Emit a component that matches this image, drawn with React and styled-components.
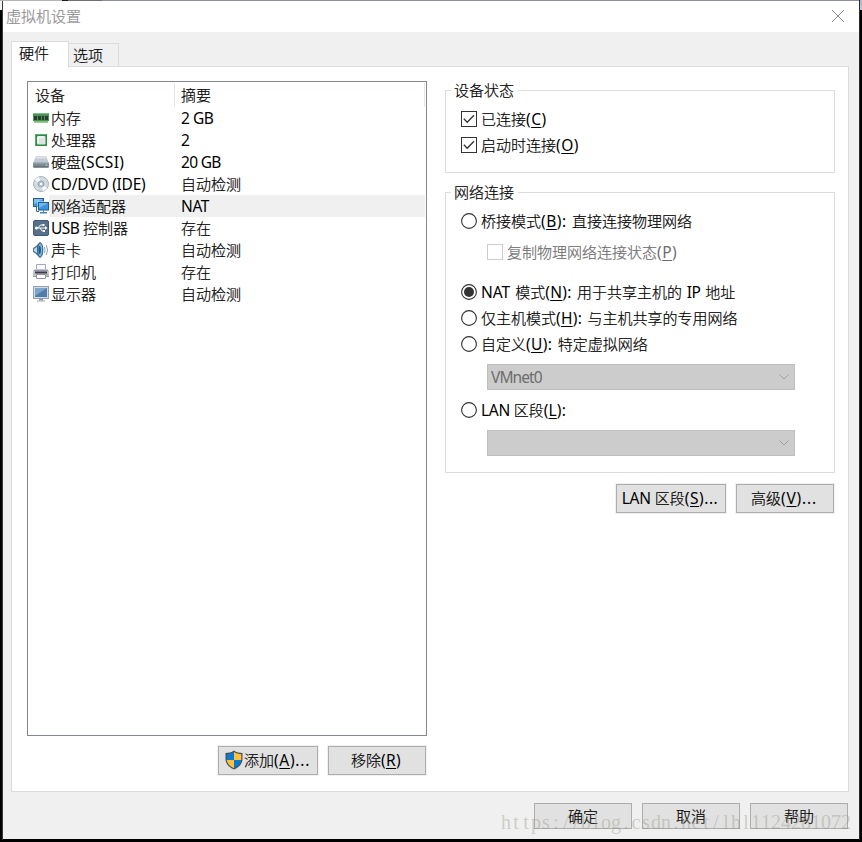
import React from "react";
import styled, { createGlobalStyle } from "styled-components";

const Global = createGlobalStyle`
  * { box-sizing: border-box; }
  body {
    margin: 0;
    background: #000;
    color: #000;
    font: 300 15px/22px "Noto Sans CJK SC", sans-serif;
    -webkit-text-stroke: 0.2px;
    overflow: hidden;
  }
`;

const Desktop = styled.div`
  height: 842px;
  padding: 1px 3px 2px;
  background:
    linear-gradient(#8b8f9b, #8b8f9b) 102px 0 / 757px 1px no-repeat,
    linear-gradient(#6f7076, #6f7076) 68px 0 / 34px 1px no-repeat,
    linear-gradient(#1d1d1d, #1d1d1d) 62px 0 / 6px 1px no-repeat,
    linear-gradient(#b5b5b5, #b5b5b5) 0 0 / 62px 1px no-repeat,
    linear-gradient(#f2f2f2, #f2f2f2) 0 0 / 2px 10px no-repeat,
    linear-gradient(#a9b0c8, #c3cade) 860px 0 / 2px 10px no-repeat,
    linear-gradient(#2c2c2c, #2c2c2c) 859px 0 / 1px 840px no-repeat,
    linear-gradient(#3a3a3a, #3a3a3a) 2px 0 / 1px 840px no-repeat,
    #000;
`;

const Window = styled.div`
  width: 856px;
  height: 838px;
  background: #f0f0f0;
  display: flex;
  flex-direction: column;
`;

const TitleBar = styled.header`
  height: 31px;
  flex: none;
  background: #fff;
  color: #8c8c8c;
  display: flex;
  justify-content: space-between;
  padding: 4px 14px 0 3px;
  svg { margin-top: 4px; }
`;

const Tabs = styled.nav`
  display: flex;
  align-items: flex-end;
  height: 26px;
  margin: 9px 0 -1px 8px;
  flex: none;
`;

const Tab = styled.div`
  width: ${(p) => (p.$active ? 58 : 50)}px;
  height: ${(p) => (p.$active ? 27 : 24)}px;
  margin-bottom: ${(p) => (p.$active ? -1 : 0)}px;
  padding: ${(p) => (p.$active ? "0 0 0 7px" : "0 0 0 4px")};
  line-height: ${(p) => (p.$active ? 22 : 21)}px;
  border: 1px solid #dcdcdc;
  border-left-width: ${(p) => (p.$active ? 1 : 0)}px;
  border-bottom: ${(p) => (p.$active ? "0" : "1px solid #dcdcdc")};
  background: ${(p) => (p.$active ? "#fff" : "#f0f0f0")};
  position: relative;
`;

const Page = styled.main`
  width: 838px;
  height: 726px;
  flex: none;
  margin-left: 8px;
  border: 1px solid #dcdcdc;
  background: #fff;
  display: flex;
  padding: 14px 13px 0 15px;
`;

const Left = styled.section`
  width: 400px;
  margin-right: 18px;
`;

const DeviceList = styled.div`
  height: 655px;
  border: 1px solid #828790;
  padding: 1px 0 0;
`;

const ListHead = styled.div`
  display: grid;
  grid-template-columns: 146px 250px 1px;
  height: 24px;
  line-height: 23px;
  > span { padding-left: 7px; }
  > span + span { border-left: 1px solid #e5e5e5; padding-left: 6px; }
  > span:last-child { padding: 0; }
`;

const DeviceRow = styled.div`
  display: grid;
  grid-template-columns: 16px 130px 1fr;
  height: 22px;
  margin: 0 1px 0 5px;
  align-items: center;
`;

const Cell = styled.span`
  height: 22px;
  line-height: 22px;
  padding-left: 2px;
  white-space: nowrap;
  background: ${(p) => (p.$selected ? "#f0f0f0" : "transparent")};
`;

const ButtonRow = styled.div`
  display: flex;
  justify-content: flex-end;
  gap: 10px;
  margin-top: ${(p) => p.$top}px;
  padding-right: ${(p) => p.$right || 0}px;
`;

const Button = styled.button`
  width: ${(p) => p.$w || 98}px;
  height: ${(p) => p.$h || 29}px;
  padding: ${(p) => (p.$h ? "0" : "0 2px 2px 0")};
  border: 1px solid #adadad;
  outline: ${(p) => (p.$h ? "0" : "1px solid #f0f0f0")};
  background: #e1e1e1;
  color: #000;
  font: inherit;
  display: flex;
  align-items: center;
  justify-content: center;
  white-space: nowrap;
`;

const Right = styled.section`
  width: 390px;
  padding-top: 9px;
`;

const Group = styled.fieldset`
  margin: 0 0 ${(p) => p.$gap || 0}px;
  min-width: 0;
  height: ${(p) => p.$h}px;
  border: 1px solid #dcdcdc;
  padding: ${(p) => p.$top}px 0 0 15px;
  margin-top: -11px;
  legend { padding: 0 4px 0 3px; margin-left: -10px; height: 22px; }
`;

const Option = styled.label`
  display: flex;
  align-items: center;
  gap: 4px;
  height: 26px;
  white-space: nowrap;
  margin: ${(p) => p.$m || "0"};
  color: ${(p) => (p.$disabled ? "#6d6d6d" : "#000")};
`;

const Combo = styled.div`
  width: 308px;
  height: 26px;
  margin: ${(p) => p.$m};
  border: 1px solid #bfbfbf;
  background: #ccc;
  color: #6d6d6d;
  display: flex;
  align-items: center;
  justify-content: space-between;
  padding: 0 4px 0 3px;
`;

const Latin = styled.span`
  font: 400 15.5px/1 "Noto Sans", sans-serif;
  -webkit-text-stroke: 0;
  letter-spacing: ${(p) => p.$ls || 0}px;
  word-spacing: ${(p) => p.$ws || 0}px;
  white-space: pre;
`;

const Key = styled.span`
  text-decoration: underline;
  text-decoration-thickness: 1px;
  text-underline-offset: 2px;
  text-decoration-skip-ink: none;
`;

const Watermark = styled.div`
  position: absolute;
  left: 501px;
  top: 810px;
  display: flex;
  font: 20px/24px "Liberation Serif", serif;
  color: rgba(150, 145, 130, 0.4);
  -webkit-text-stroke: 0;
  pointer-events: none;
  span { width: 10px; text-align: center; }
`;

/* Splits a caption into Han and Latin runs; "&" marks the access key. */
function Label({ text, ls = [], ws = 0 }) {
  let n = -1;
  return (
    <span>
      {text.match(/[\x20-\x7e]+|[^\x20-\x7e]+/g).map((run, i) => {
        if (!/[\x20-\x7e]/.test(run)) return run;
        n += 1;
        const at = run.indexOf("&");
        return (
          <Latin key={i} $ls={ls[n]} $ws={ws}>
            {at < 0 ? run : <>{run.slice(0, at)}<Key>{run[at + 1]}</Key>{run.slice(at + 2)}</>}
          </Latin>
        );
      })}
    </span>
  );
}

const Svg = ({ children }) => (
  <svg width="16" height="16" viewBox="0 0 16 16">{children}</svg>
);

const icons = {
  memory: (
    <Svg>
      <path d="M0 3h16v8h-1v1.500H1V11H0z" fill="#3d9a4d" />
      <path d="M0 3h16v1H0z" fill="#79c383" />
      <path d="M1 5h3v5H1zM5 5h3v5H5zM9 5h2v5H9zM12 5h3v5h-3z" fill="#2d3b33" />
      <path d="M1 5h3v1H1zM5 5h3v1H5zM9 5h2v1H9zM12 5h3v1h-3z" fill="#6b7a70" />
      <path d="M1.500 11.500h13" stroke="#c9d98c" strokeDasharray="1 1" />
    </Svg>
  ),
  cpu: (
    <Svg>
      <rect x="2" y="2" width="12" height="12" fill="#2f8a45" />
      <path d="M2.500 13.500v-11h11" fill="none" stroke="#57b36a" />
      <rect x="4" y="4" width="8.500" height="8.500" rx="1" fill="#dde3de" />
      <path d="M5 11V5h6" stroke="#fff" fill="none" />
    </Svg>
  ),
  disk: (
    <Svg>
      <path d="M3 2h10l3 7H0z" fill="#c3cad3" />
      <path d="M3.500 2.500h9l1 2h-11z" fill="#dfe4e9" />
      <rect y="8.500" width="16" height="5" rx="1" fill="#7d8996" />
      <path d="M.5 9h15" stroke="#a9b4c0" />
      <path d="M.5 13h15" stroke="#525c68" />
      <circle cx="13.500" cy="11.200" r="0.900" fill="#8fe08f" />
    </Svg>
  ),
  cd: (
    <Svg>
      <circle cx="8" cy="8" r="7.500" fill="#d3dae2" stroke="#a9b4c1" />
      <path d="M8 8L2 4a7 7 0 0 1 4-3zM8 8l6 4a7 7 0 0 1-4 3z" fill="#f6f9fc" />
      <circle cx="8" cy="8" r="3" fill="#b2c0d0" stroke="#8797aa" strokeWidth=".7" />
      <circle cx="8" cy="8" r="1.200" fill="#fff" />
    </Svg>
  ),
  network: (
    <Svg>
      <rect x=".5" y=".5" width="10" height="8" fill="#3d97da" stroke="#2b5d8c" />
      <path d="M1 1h9L1 6z" fill="#7cc1ef" />
      <path d="M3.500 9v4.500H6" fill="none" stroke="#356a98" />
      <rect x="4.500" y="3.500" width="11" height="9" fill="#e7f3fc" />
      <rect x="5.500" y="4.500" width="10" height="7.500" fill="#3a96dc" stroke="#255a8c" />
      <path d="M6 5h9l-9 5z" fill="#6bb9ee" />
      <path d="M10 12h1v2h3v1.500H7V14h3z" fill="#4682b4" />
    </Svg>
  ),
  usb: (
    <Svg>
      <rect x=".5" y=".5" width="15" height="15" rx="1.500" fill="#566f8a" stroke="#425b75" />
      <g stroke="#fff" fill="none">
        <path d="M2.500 8H13M5 8l2.500-3H10M7 8l2 3h2" />
      </g>
      <circle cx="3.500" cy="8" r="1.600" fill="#fff" />
      <path d="M12 6l2.500 2L12 10zM9.500 4h2v2h-2zM10 10h2v2h-2z" fill="#fff" />
    </Svg>
  ),
  sound: (
    <Svg>
      <path d="M0 6l3-2 4-4c3 2 3 13 0 16l-4-4-3-2z" fill="#54789b" />
      <path d="M1 7l3-2v6L1 9z" fill="#b9d9ef" />
      <ellipse cx="7.200" cy="8" rx="2.600" ry="7.200" fill="#76b9e6" stroke="#35597c" />
      <ellipse cx="6.700" cy="8" rx="1.200" ry="4" fill="#23598a" />
      <path d="M11.300 5q1.500 3 0 6M13.200 3q2.800 5 0 10" fill="none" stroke="#8ea4bc" />
    </Svg>
  ),
  printer: (
    <Svg>
      <path d="M3.500 .5h9V6h-9z" fill="#fafafd" stroke="#a6a6b8" />
      <path d="M2 5h12l2 2v6H0V7z" fill="#c2c2d0" />
      <path d="M1 6.500h14M0 12.500h16" stroke="#9494a8" />
      <path d="M2 7.500h12v2H2z" fill="#3d3d49" />
      <path d="M3.500 10.500h9v4h-9z" fill="#fff" stroke="#9494a8" />
      <path d="M13 10.500h2" stroke="#68cb68" />
    </Svg>
  ),
  display: (
    <Svg>
      <rect x=".5" y=".5" width="15" height="12" fill="#d4dde6" stroke="#8f9fb0" />
      <rect x="2" y="2" width="12" height="9" fill="#4f7cab" />
      <path d="M2 2h12L2 10z" fill="#7fa3c9" />
      <path d="M6 13h4v1.500H6z" fill="#8c9aa9" />
      <path d="M4 15h8" stroke="#99a6b4" />
    </Svg>
  ),
};

const Shield = () => (
  <svg width="20" height="20" viewBox="0 0 20 20">
    <path d="M10 .5C7.500 2.300 4.500 3 1.500 3v6c0 5 4 8.500 8.500 10.500C14.500 17.500 18.500 14 18.500 9V3c-3 0-6-.7-8.500-2.500z" fill="#44515c" />
    <path d="M10 2C7.700 3.400 5.300 4 2.700 4.200V10H10z" fill="#0b78d4" />
    <path d="M10 2c2.300 1.400 4.700 2 7.300 2.200V10H10z" fill="#ffc13b" />
    <path d="M2.700 10H10v8.200C6 16.300 3 13.500 2.700 10z" fill="#ffc13b" />
    <path d="M17.300 10H10v8.200c4-1.900 7-4.700 7.300-8.200z" fill="#0b78d4" />
  </svg>
);

const Check = ({ checked, disabled }) => (
  <svg width="16" height="16" viewBox="0 0 16 16">
    <rect x=".5" y=".5" width="15" height="15" fill="#fff" stroke={disabled ? "#ccc" : "#333"} />
    {checked && <path d="M2.800 7.800l3.400 3.400 6.800-7" fill="none" stroke="#333" strokeWidth="1.300" />}
  </svg>
);

const Radio = ({ checked }) => (
  <svg width="16" height="16" viewBox="0 0 16 16">
    <circle cx="8" cy="8" r="7.400" fill="#fff" stroke="#333" strokeWidth="1.100" />
    {checked && <circle cx="8" cy="8" r="5" fill="#333" />}
  </svg>
);

const Chevron = () => (
  <svg width="12" height="8" viewBox="0 0 12 8">
    <path d="M1.500 1.500L6 6l4.500-4.500" fill="none" stroke="#a0a0a0" />
  </svg>
);

const devices = [
  ["memory", "内存", "2 GB", -0.5],
  ["cpu", "处理器", "2", 0],
  ["disk", "硬盘(SCSI)", "20 GB", -0.7, 0.3],
  ["cd", "CD/DVD (IDE)", "自动检测", 0, -0.22],
  ["network", "网络适配器", "NAT", -0.4],
  ["usb", "USB 控制器", "存在", 0, -0.5],
  ["sound", "声卡", "自动检测"],
  ["printer", "打印机", "存在"],
  ["display", "显示器", "自动检测"],
];

export default function App() {
  return (
    <Desktop>
      <Global />
      <Window>
        <TitleBar>
          虚拟机设置
          <svg width="14" height="14" viewBox="0 0 14 14">
            <path d="M1 1l12 12M13 1L1 13" stroke="#888" />
          </svg>
        </TitleBar>
        <Tabs>
          <Tab $active>硬件</Tab>
          <Tab>选项</Tab>
        </Tabs>
        <Page>
          <Left>
            <DeviceList>
              <ListHead><span>设备</span><span>摘要</span><span /></ListHead>
              {devices.map(([icon, name, summary, sls, nls]) => (
                <DeviceRow key={icon}>
                  {icons[icon]}
                  <Cell $selected={icon === "network"}><Label text={name} ls={[nls]} /></Cell>
                  <Cell $selected={icon === "network"}><Label text={summary} ls={[sls]} /></Cell>
                </DeviceRow>
              ))}
            </DeviceList>
            <ButtonRow $top={10} $right={1}>
              <Button $w={100}><Shield /><Label text="添加(&A)..." ls={[0.75]} /></Button>
              <Button><Label text="移除(&R)" ls={[0.4]} /></Button>
            </ButtonRow>
          </Left>
          <Right>
            <Group $h={94} $top={5} $gap={19}>
              <legend>设备状态</legend>
              <Option><Check checked /><Label text="已连接(&C)" ls={[0.5]} /></Option>
              <Option><Check checked /><Label text="启动时连接(&O)" ls={[0.5]} /></Option>
            </Group>
            <Group $h={292} $top={5}>
              <legend>网络连接</legend>
              <Option><Radio /><Label text="桥接模式(&B): 直接连接物理网络" ls={[0.5]} ws={1} /></Option>
              <Option $disabled $m="5px 0 14px 26px"><Check disabled /><Label text="复制物理网络连接状态(&P)" ls={[0.5]} /></Option>
              <Option><Radio checked /><Label text="NAT 模式(&N): 用于共享主机的 IP 地址" ls={[0, 0.3, -0.4]} ws={1} /></Option>
              <Option><Radio /><Label text="仅主机模式(&H): 与主机共享的专用网络" ls={[0.3]} ws={1} /></Option>
              <Option><Radio /><Label text="自定义(&U): 特定虚拟网络" ls={[0.4]} ws={1} /></Option>
              <Combo $m="7px 0 7px 26px"><Label text="VMnet0" ls={[-0.9]} /><Chevron /></Combo>
              <Option><Radio /><Label text="LAN 区段(&L):" ls={[-0.3, 0.2]} /></Option>
              <Combo $m="7px 0 0 26px"><span /><Chevron /></Combo>
            </Group>
            <ButtonRow $top={11} $right={1}>
              <Button $w={110}><Label text="LAN 区段(&S)..." ls={[-0.2, 0.55]} /></Button>
              <Button><Label text="高级(&V)..." ls={[0.85]} /></Button>
            </ButtonRow>
          </Right>
        </Page>
        <ButtonRow $top={11} $right={11}>
          <Button $h={26}>确定</Button>
          <Button $h={26}>取消</Button>
          <Button $h={26}>帮助</Button>
        </ButtonRow>
      </Window>
      <Watermark>
        {[..."https://blog.csdn.net/lhl1124281072"].map((c, i) => <span key={i}>{c}</span>)}
      </Watermark>
    </Desktop>
  );
}
